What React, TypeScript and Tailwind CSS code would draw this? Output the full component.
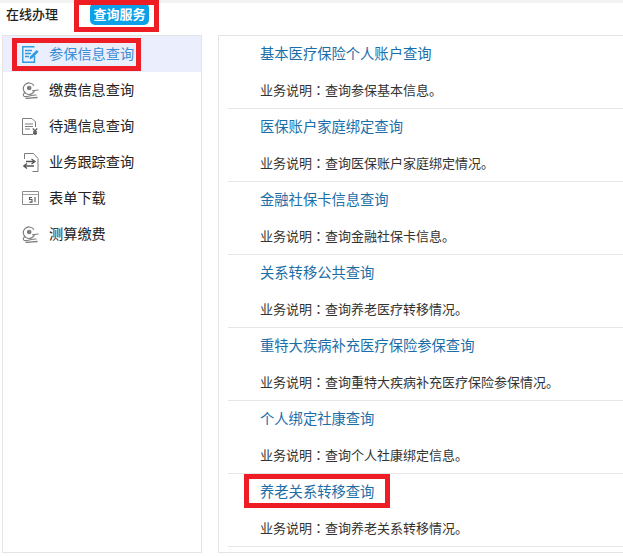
const font = { fontFamily: '"Noto Sans CJK SC", sans-serif' }

function FormIcon() {
  return (
    <svg width="17" height="17" viewBox="0 0 17 17" fill="none" stroke="#2f9bdc" strokeWidth="1.4">
      <path d="M12.5 9.5v6.8H.8V.8h11.7" />
      <path d="M3 4.5h7M3 7.5h6M3 10.5h4" />
      <path d="M7.5 13l.6-2.4L14.6 4l2 1.8-6.6 6.6z" fill="#2f9bdc" stroke="none" />
    </svg>
  )
}

function PayIcon() {
  return (
    <svg width="17" height="17" viewBox="0 0 17 17" fill="none" stroke="#7d7d7d" strokeWidth="1.1">
      <path d="M12.6 8.5A5.8 5.8 0 1 1 12 3.6" />
      <circle cx="7.2" cy="6" r="1.8" fill="#7d7d7d" />
      <path d="M10 8.8l6.5-.8" />
      <path d="M3.5 10.5C1 11.5.5 14 2.5 14.5c3 .6 6-1.5 12-1.5" />
      <path d="M3.5 16.3c3.5.4 7.5-.8 12-.8" strokeWidth="1.3" />
    </svg>
  )
}

function BillIcon() {
  return (
    <svg width="17" height="17" viewBox="0 0 17 17" fill="none" stroke="#7d7d7d" strokeWidth="1">
      <path d="M11 16.5H.5V.5h9.5l3.5 3.5v5" />
      <path d="M3 6h8M3 8.5h8M3 11h5" />
      <path d="M10.8 10.5l2.2 2.4 2.2-2.4M13 12.5v4.5M11 14h4M11 15.7h4" strokeWidth="1.3" stroke="#555" />
    </svg>
  )
}

function TrackIcon() {
  return (
    <svg width="16" height="19" viewBox="0 0 16 19" fill="none" stroke="#7d7d7d" strokeWidth="1">
      <path d="M1.5 6V.5h9l4.5 5v13H9.5" />
      <path d="M3 8.5h8M8.5 6l3.5 2.5L8.5 11" strokeWidth="1.3" stroke="#555" />
      <path d="M11 13H1M4 10.5L.8 13 4 15.5" strokeWidth="1.3" stroke="#555" />
    </svg>
  )
}

function SheetIcon() {
  return (
    <svg width="17" height="14" viewBox="0 0 17 14" fill="none" stroke="#8c8c8c" strokeWidth="1">
      <path d="M.5.5h16v13H.5z" />
      <path d="M.5 3.5h16" strokeWidth=".8" />
      <path d="M10 6.5H7.5v2H10v2.6H7.4M13 6v5.2" stroke="#555" strokeWidth="1.1" />
    </svg>
  )
}

const menu = [
  { label: '参保信息查询', icon: <FormIcon />, active: true },
  { label: '缴费信息查询', icon: <PayIcon /> },
  { label: '待遇信息查询', icon: <BillIcon /> },
  { label: '业务跟踪查询', icon: <TrackIcon /> },
  { label: '表单下载', icon: <SheetIcon /> },
  { label: '测算缴费', icon: <PayIcon /> },
]

const services = [
  ['基本医疗保险个人账户查询', '查询参保基本信息。'],
  ['医保账户家庭绑定查询', '查询医保账户家庭绑定情况。'],
  ['金融社保卡信息查询', '查询金融社保卡信息。'],
  ['关系转移公共查询', '查询养老医疗转移情况。'],
  ['重特大疾病补充医疗保险参保查询', '查询重特大疾病补充医疗保险参保情况。'],
  ['个人绑定社康查询', '查询个人社康绑定信息。'],
  ['养老关系转移查询', '查询养老关系转移情况。'],
]

export default function App() {
  return (
    <div className="relative h-[556px] w-[623px] overflow-hidden bg-white" style={font}>
      {/* top tabs */}
      <div className="flex h-[35px] items-center border-t-[3px] border-[#f2f2f2] pb-[10px]">
        <span className="ml-[6px] text-[13px] font-medium text-[#222]">在线办理</span>
        <span className="ml-[32px] flex h-[22px] w-[59px] items-center justify-center rounded-[5px] bg-[#0ba0e8] text-[13px] font-bold text-white">
          查询服务
        </span>
      </div>

      <div className="flex items-start">
        {/* sidebar */}
        <div className="ml-[2px] h-[518px] w-[200px] border border-[#e4e4e4]">
          {menu.map((item) => (
            <div
              key={item.label}
              className={`flex h-[36px] items-center ${item.active ? 'bg-[#eaeefd] text-[#3a8fd6]' : 'text-[#222]'}`}
            >
              <span className="flex w-[46px] justify-end pr-[10px]">{item.icon}</span>
              <span className="pb-[3px] text-[14.2px] leading-[20px]">{item.label}</span>
            </div>
          ))}
        </div>

        {/* list */}
        <div className="ml-[16px] h-[518px] flex-1 border-y border-l border-[#e4e4e4] pl-[9px]">
          {services.map(([title, desc]) => (
            <div key={title} className="h-[73px] border-b border-[#e6e6e6] pl-[32px]">
              <div className="pt-[7px] text-[14.3px] leading-[20px] text-[#1b6ea8]">{title}</div>
              <div className="pt-[17px] text-[13px] leading-[20px] text-[#333]">
                业务说明<span style={{ fontFamily: '"Noto Sans CJK JP", sans-serif' }}>：</span>{desc}
              </div>
            </div>
          ))}
        </div>
      </div>

      {/* red annotation boxes */}
      <div className="absolute left-[74px] top-0 h-[32px] w-[85px] border-[5px] border-[#ee1c25]" />
      <div className="absolute left-[12px] top-[38px] h-[33px] w-[129px] border-[5px] border-[#ee1c25]" />
      <div className="absolute left-[244px] top-[474px] h-[34px] w-[146px] border-[5px] border-[#ee1c25]" />
    </div>
  )
}
